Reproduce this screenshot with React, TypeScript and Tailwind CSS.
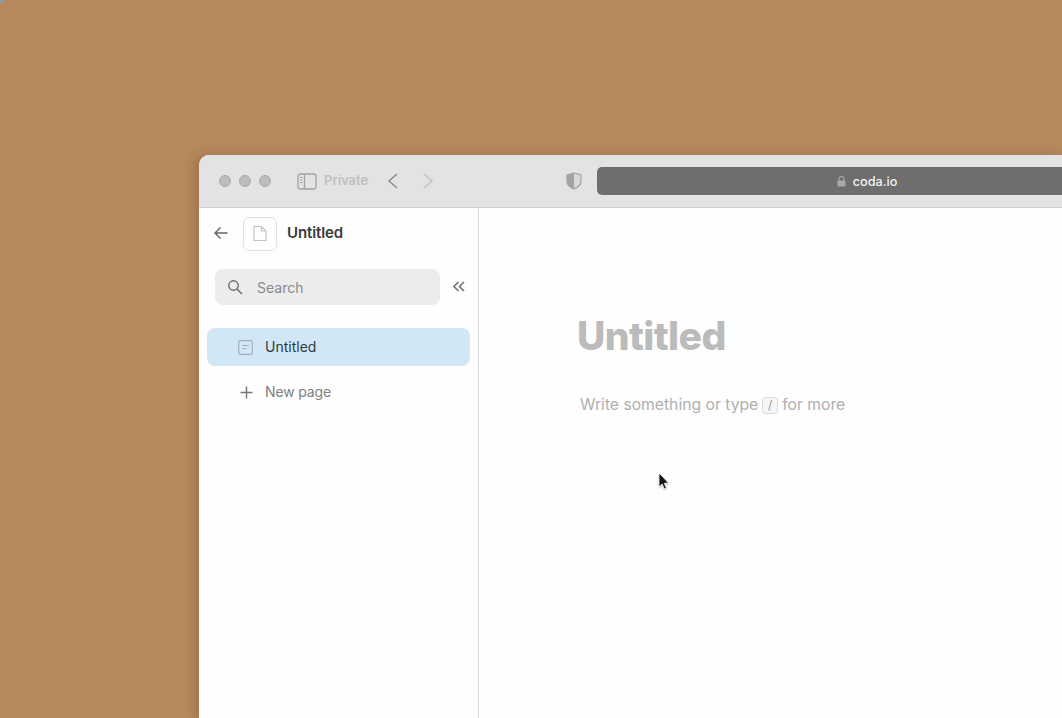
const font = { fontFamily: "Inter, 'Liberation Sans', sans-serif" };

function Cursor() {
  return (
    <svg className="absolute left-[658px] top-[472px] drop-shadow-[0_1px_1px_rgba(0,0,0,0.25)]" width="12" height="20" viewBox="0 0 12 20">
      <path d="M1 1 L1 15 L4.2 12 L6.3 17 L8.4 16.1 L6.3 11.300 L10.6 11 Z" fill="#111" stroke="#fff" strokeWidth="0.8" />
    </svg>
  );
}

export default function App() {
  return (
    <div style={font} className="relative h-[718px] w-[1062px] overflow-hidden bg-[#b5885e] pl-[199px] pt-[155px]">
      <div className="absolute left-0 top-0 h-[3px] w-[4px] bg-[#8a9aa3]" />
      <div className="flex h-[563px] w-[863px] flex-col overflow-hidden rounded-tl-[10px] bg-[#fefefe] shadow-[-4px_0_10px_rgba(70,40,10,0.22)]">
        <div className="flex h-[53px] shrink-0 items-center border-b border-[#cfcfcf] bg-[#e3e3e3] pl-[20px]">
          <div className="flex gap-[8px]">
            <span className="size-[12px] rounded-full border border-[#a8a8a8] bg-[#bcbcbc]" />
            <span className="size-[12px] rounded-full border border-[#a8a8a8] bg-[#bcbcbc]" />
            <span className="size-[12px] rounded-full border border-[#a8a8a8] bg-[#bcbcbc]" />
          </div>
          <svg className="ml-[26px]" width="20" height="17" viewBox="0 0 20 17" fill="none" stroke="#a3a3a3" strokeWidth="1.3">
            <rect x="1" y="1" width="18" height="15" rx="2.5" />
            <path d="M7.5 1v15" />
            <path d="M3 4.5h2.5M3 7h2.5M3 9.5h2.5" strokeWidth="1" />
          </svg>
          <span className="ml-[7px] text-[13px] font-semibold text-[#c0c0c0]">Private</span>
          <svg className="ml-[18px]" width="14" height="18" viewBox="0 0 14 18" fill="none" stroke="#8f8f8f" strokeWidth="1.6">
            <path d="M11 2 3 9l8 7" />
          </svg>
          <svg className="ml-[21px]" width="14" height="18" viewBox="0 0 14 18" fill="none" stroke="#c2c2c2" strokeWidth="1.6">
            <path d="m3 2 8 7-8 7" />
          </svg>
          <svg className="ml-[131px]" width="16" height="18" viewBox="0 0 16 18">
            <path d="M8 1 15 3v6c0 4-3 6.500-7 8-4-1.500-7-4-7-8V3z" fill="#d9d9d9" stroke="#a0a0a0" strokeWidth="1.200" />
            <path d="M8 1 1 3v6c0 4 3 6.500 7 8z" fill="#a3a3a3" />
          </svg>
          <div className="ml-[15px] flex h-[28px] flex-1 items-center justify-center gap-[7px] rounded-l-[5px] bg-[#6e6e6e] pl-[75px] text-[12.700px] font-medium text-[#f2f2f2]">
            <svg className="mt-[1px]" width="9" height="11" viewBox="0 0 9 11" fill="#a9a9a9">
              <rect x="0.500" y="4.500" width="8" height="6" rx="1" />
              <path d="M2 5V3a2.500 2.500 0 0 1 5 0v2" fill="none" stroke="#a9a9a9" strokeWidth="1.100" />
            </svg>
            <span className="mt-[1px]">coda.io</span>
          </div>
        </div>
        <div className="flex min-h-0 flex-1">
          <aside className="w-[280px] shrink-0 border-r border-[#d8d8d8] bg-[#fefefe]">
            <div className="flex h-[52px] items-center pb-[1px] pl-[15px]">
              <svg className="mb-[1px]" width="14" height="14" viewBox="0 0 14 14" fill="none" stroke="#666" strokeWidth="1.500">
                <path d="M13.500 7H1M6.500 1.500 1 7l5.500 5.500" />
              </svg>
              <div className="ml-[15px] flex size-[34px] items-center justify-center rounded-[6px] border border-[#e2e2e2]">
                <svg width="14" height="17" viewBox="0 0 14 17" fill="none" stroke="#c4c4c4" strokeWidth="1.200">
                  <path d="M1 1.500h7.500L13 6v9.500H1z" />
                  <path d="M8.500 1.500V6H13" />
                </svg>
              </div>
              <span className="ml-[10px] text-[15px] font-semibold tracking-[-0.1px] text-[#3a3a3a]">Untitled</span>
            </div>
            <div className="mt-[9px] flex items-center pl-[16px]">
              <div className="flex h-[36px] w-[225px] items-center rounded-[8px] bg-[#ececec] pl-[12px] text-[14px] text-[#8a8a8a]">
                <svg width="16" height="16" viewBox="0 0 16 16" fill="none" stroke="#6f6f6f" strokeWidth="1.500">
                  <circle cx="6.500" cy="6.500" r="4.700" />
                  <path d="m10 10 5 5" />
                </svg>
                <span className="ml-[14px]">Search</span>
              </div>
              <svg className="ml-[13px] mb-[1px]" width="12" height="11" viewBox="0 0 12 11" fill="none" stroke="#777" strokeWidth="1.700">
                <path d="M5.500 1 1 5.500 5.500 10M11 1 6.500 5.500 11 10" />
              </svg>
            </div>
            <div className="ml-[8px] mt-[23px] flex h-[38px] w-[263px] items-center rounded-[8px] bg-[#d2e7f5] pb-[2px] pl-[31px] text-[14px] text-[#2f3b45]">
              <svg className="mt-[2px]" width="15" height="15" viewBox="0 0 15 15" fill="none" stroke="#a3afb8" strokeWidth="1.200">
                <rect x="0.700" y="0.700" width="13.600" height="13.600" rx="1.500" />
                <path d="M4 5.500h7M4 8.500h4.500" />
              </svg>
              <span className="ml-[12px]">Untitled</span>
            </div>
            <div className="ml-[8px] mt-[7px] flex h-[38px] w-[263px] items-center pb-[2px] pl-[33px] text-[14px] tracking-[-0.15px] text-[#808080]">
              <svg className="mt-[2px]" width="13" height="13" viewBox="0 0 13 13" fill="none" stroke="#777" strokeWidth="1.500">
                <path d="M6.500 0.500v12M0.500 6.500h12" />
              </svg>
              <span className="ml-[12px]">New page</span>
            </div>
          </aside>
          <main className="min-w-0 flex-1 pl-[98px] pt-[102px]">
            <h1 className="text-[39px] font-extrabold leading-[52px] tracking-[-0.6px] text-[#bbbbbb]">Untitled</h1>
            <p className="ml-[3px] mt-[31px] flex h-[24px] items-center text-[15.700px] text-[#b0b0b0]">
              Write something or type
              <span className="mx-[4px] flex h-[17px] w-[16px] items-center justify-center rounded-[3px] border border-[#dcdcdc] bg-[#f6f6f6] text-[12px] text-[#999]">/</span>
              for more
            </p>
          </main>
        </div>
      </div>
      <Cursor />
    </div>
  );
}
